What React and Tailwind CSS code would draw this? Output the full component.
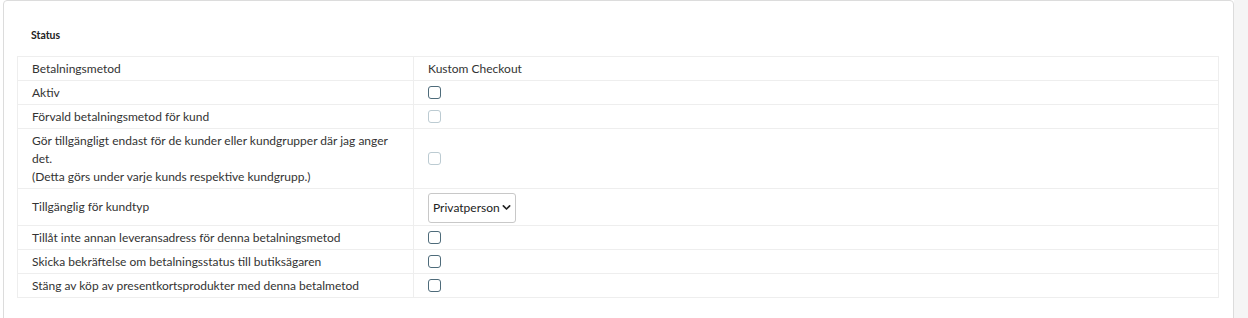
const rows = [
  { label: 'Aktiv', type: 'check' },
  { label: 'Förvald betalningsmetod för kund', type: 'disabled' },
  {
    label: (
      <>
        Gör tillgängligt endast för de kunder eller kundgrupper där jag anger det.
        <br />
        (Detta görs under varje kunds respektive kundgrupp.)
      </>
    ),
    type: 'disabled',
  },
  { label: 'Tillgänglig för kundtyp', type: 'select' },
  { label: 'Tillåt inte annan leveransadress för denna betalningsmetod', type: 'check' },
  { label: 'Skicka bekräftelse om betalningsstatus till butiksägaren', type: 'check' },
  { label: 'Stäng av köp av presentkortsprodukter med denna betalmetod', type: 'check' },
];

const Checkbox = ({ disabled }) => (
  <span
    className={`inline-block w-[13px] h-[13px] rounded-[3px] border bg-white align-middle ${
      disabled ? 'border-[#bccbd2]' : 'border-[#4e6b7a]'
    }`}
  />
);

const Select = () => (
  <div className="inline-flex items-center h-[30px] pl-[4px] pr-[4px] border border-[#c8c8c8] rounded-[3px] bg-white text-[12px] text-[#222]">
    Privatperson
    <svg className="w-[9px] h-[9px] ml-[2px]" viewBox="0 0 10 10" fill="none">
      <path d="M1.5 3.2 L5 6.7 L8.5 3.2" stroke="#222" strokeWidth="1.8" strokeLinecap="round" strokeLinejoin="round" />
    </svg>
  </div>
);

export default function App() {
  return (
    <div className="flex w-[1248px] h-[318px] overflow-hidden bg-white" style={{ fontFamily: 'Lato, "Open Sans", sans-serif' }}>
      <div className="w-[3px] bg-white" />
      <div className="w-[1231px] h-[330px] border border-[#dcdcdc] rounded-[4px] bg-white pt-[28px] pl-[13px] pr-[14px]">
        <div className="text-[10.5px] font-bold text-[#222] pl-[14px] leading-[12px]">Status</div>
        <table className="mt-[15px] w-[1202px] border-collapse text-[12px] text-[#333] leading-[18px]">
          <tbody>
            <tr className="border border-[#eeeeee]">
              <td className="w-[396px] pl-[14px] pr-[15px] pt-[3px] pb-[2px] border-r border-[#eeeeee]">Betalningsmetod</td>
              <td className="px-[14px] pt-[3px] pb-[2px]">Kustom Checkout</td>
            </tr>
            {rows.map((r, i) => (
              <tr key={i} className="border border-[#eeeeee]">
                <td className={`w-[396px] pl-[14px] pr-[15px] border-r border-[#eeeeee] ${r.type === 'select' ? 'py-[9px]' : 'pt-[3px] pb-[2px]'}`}>
                  {r.label}
                </td>
                <td className={`px-[14px] ${r.type === 'select' ? 'pt-[3px] pb-[2px]' : 'pt-[2px] pb-[3px]'}`}>
                  {r.type === 'select' ? <Select /> : <Checkbox disabled={r.type === 'disabled'} />}
                </td>
              </tr>
            ))}
          </tbody>
        </table>
      </div>
      <div className="flex-1 bg-[#f5f5f5]" />
    </div>
  );
}
